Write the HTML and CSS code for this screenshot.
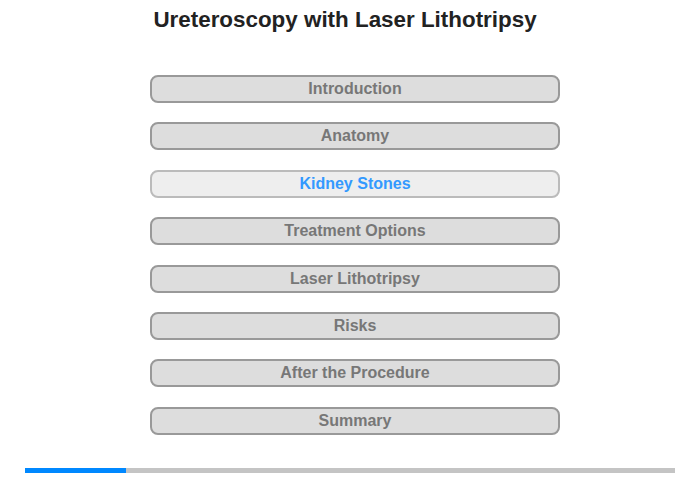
FILE: index.html
```html
<!doctype html>
<html lang="en">
  <head>
    <meta charset="UTF-8" />
    <meta name="viewport" content="width=device-width, initial-scale=1.0" />
    <title>Ureteroscopy with Laser Lithotripsy</title>
    <link rel="stylesheet" href="styles.css">
  </head>

  <body>
    <h1>Ureteroscopy with Laser Lithotripsy</h1>
    <nav class="menu">
      <a class="item" href="#">Introduction</a>
      <a class="item" href="#">Anatomy</a>
      <a class="item active" href="#">Kidney Stones</a>
      <a class="item" href="#">Treatment Options</a>
      <a class="item" href="#">Laser Lithotripsy</a>
      <a class="item" href="#">Risks</a>
      <a class="item" href="#">After the Procedure</a>
      <a class="item" href="#">Summary</a>
    </nav>
    <div class="progress">
      <div class="progress-fill" style="width: 101px"></div>
    </div>
  </body>
</html>
```

FILE: styles.css
```css
  body {
    margin: 0;
    font-family: "Liberation Sans", Arial, sans-serif;
    background-color: #fff;
  }

  h1 {
    margin: 7px 10px 0 0;
    font-size: 22.4px;
    line-height: 26px;
    text-align: center;
    color: #222;
  }

  .menu {
    display: flex;
    flex-direction: column;
    gap: 19.4px;
    width: 410px;
    margin: 42px 0 0 150px;
  }

  .item {
    display: block;
    height: 24px;
    line-height: 24px;
    border: 2px solid #999;
    border-radius: 8px;
    background-color: #ddd;
    color: #777;
    font-size: 16px;
    font-weight: bold;
    text-align: center;
    text-decoration: none;
  }

  .item.active {
    background-color: #eee;
    border-color: #bbb;
    color: #3399ff;
  }

  .progress {
    height: 5px;
    margin: 33px 25px 0;
    background-color: #c4c4c4;
  }

  .progress-fill {
    height: 100%;
    background-color: #0088ff;
  }
```
